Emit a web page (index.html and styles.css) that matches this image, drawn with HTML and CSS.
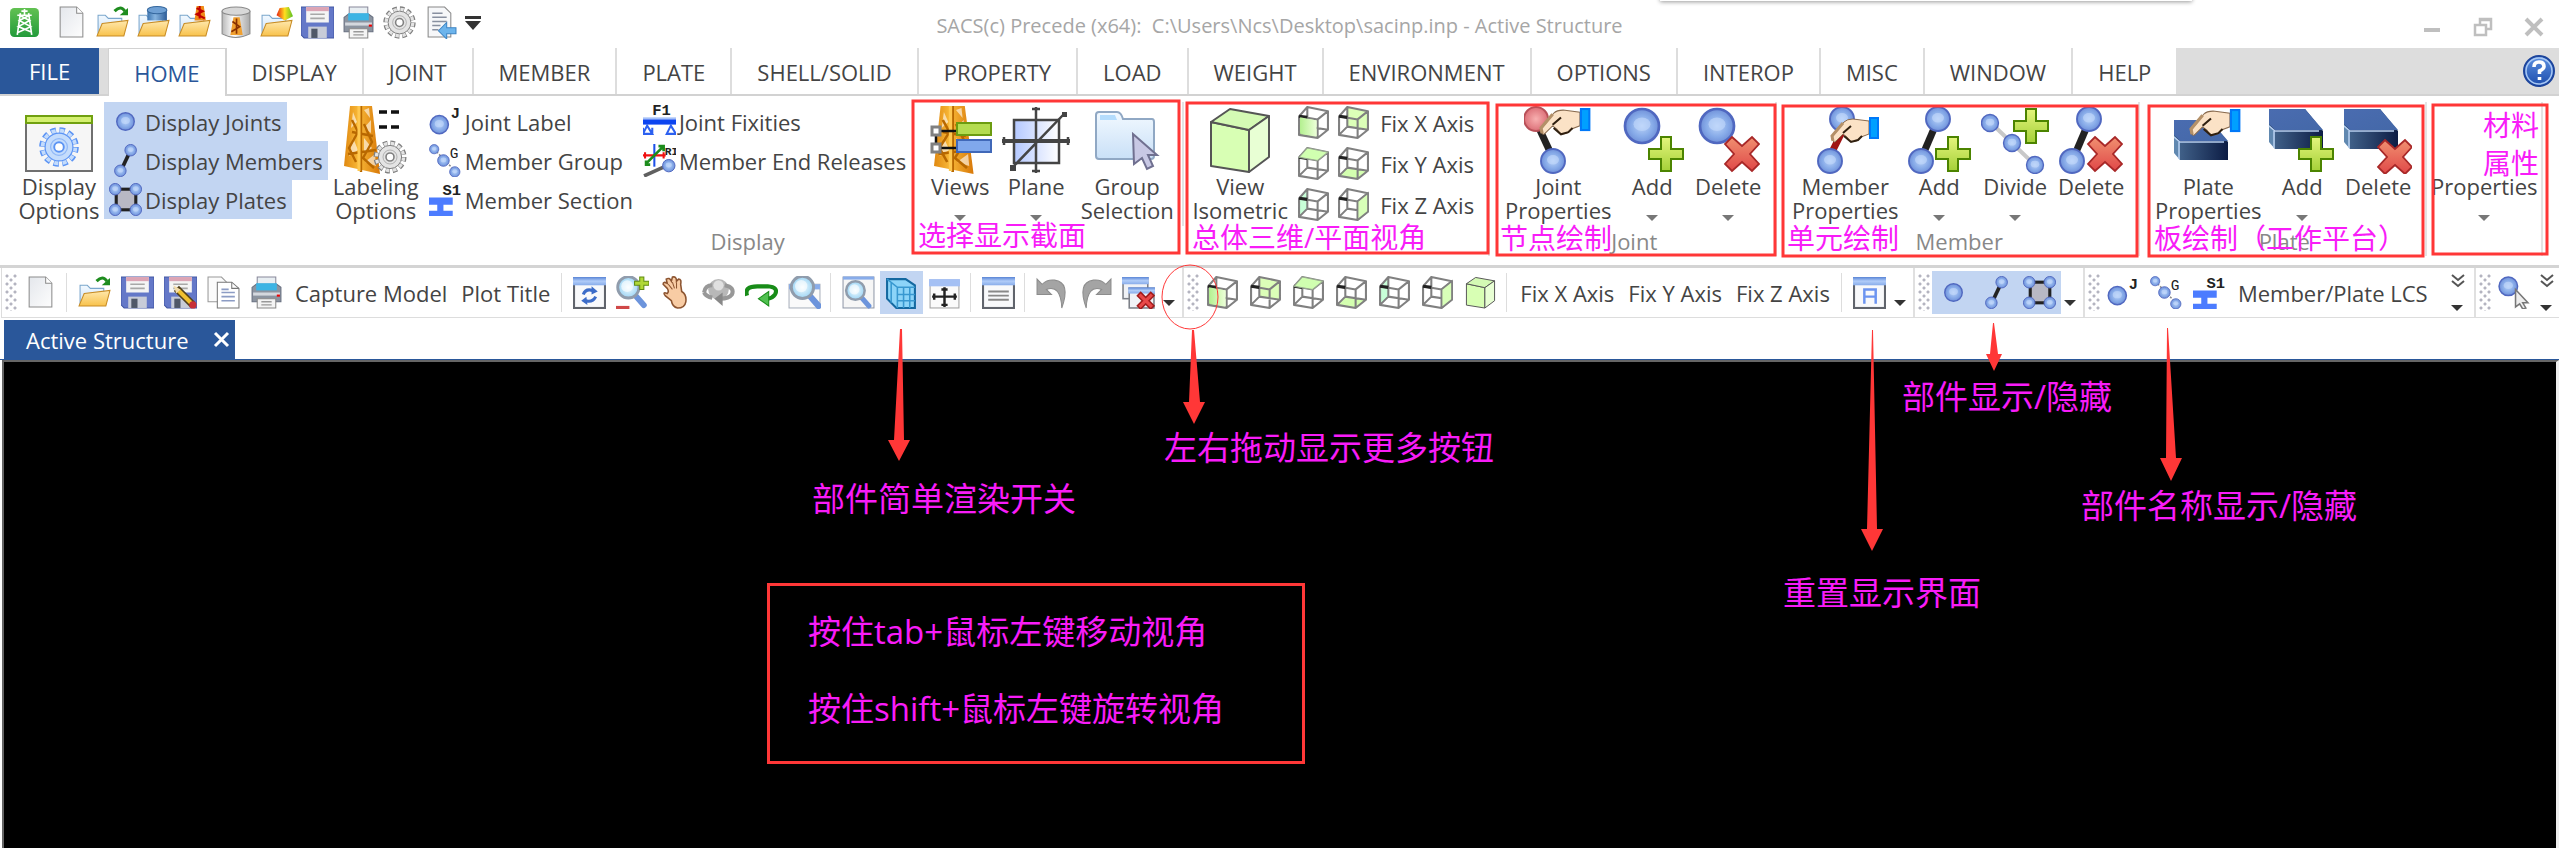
FILE: index.html
```html
<!DOCTYPE html>
<html lang="en">
<head>
<meta charset="utf-8">
<title>SACS(c) Precede (x64)</title>
<link rel="stylesheet" href="styles.css">
</head>
<body>
<svg class="defs" aria-hidden="true">
<defs>
<radialGradient id="gBall"><stop offset="0" stop-color="#b9d2f8"/><stop offset=".65" stop-color="#86aae8"/><stop offset="1" stop-color="#7090d8"/></radialGradient>
<radialGradient id="gRed"><stop offset="0" stop-color="#f8b0b0"/><stop offset="1" stop-color="#dc7078"/></radialGradient>
<linearGradient id="gFold" x2="0" y2="1"><stop offset="0" stop-color="#ffe9ae"/><stop offset="1" stop-color="#f8c24c"/></linearGradient>
<linearGradient id="gBlue" x2="0" y2="1"><stop offset="0" stop-color="#f2f9ff"/><stop offset="1" stop-color="#c9e0f7"/></linearGradient>
<linearGradient id="gDoc" x2="1" y2="1"><stop offset="0" stop-color="#e4e7ec"/><stop offset="1" stop-color="#fdfdfd"/></linearGradient>
<linearGradient id="gApp" x2="0" y2="1"><stop offset="0" stop-color="#62c152"/><stop offset="1" stop-color="#239b3b"/></linearGradient>
<linearGradient id="gPlus" x2="0" y2="1"><stop offset="0" stop-color="#e4f57c"/><stop offset="1" stop-color="#a4d038"/></linearGradient>
<linearGradient id="gX" x2="0" y2="1"><stop offset="0" stop-color="#f09070"/><stop offset="1" stop-color="#e04848"/></linearGradient>
<linearGradient id="gTop" x2="1" y2="1"><stop offset="0" stop-color="#4a6cb0"/><stop offset="1" stop-color="#4468a8"/></linearGradient>
<linearGradient id="gSide"><stop offset="0" stop-color="#406088"/><stop offset="1" stop-color="#0c1c44"/></linearGradient>
<linearGradient id="gJack"><stop offset="0" stop-color="#e08810"/><stop offset=".4" stop-color="#f8b838"/><stop offset="1" stop-color="#d87808"/></linearGradient>
<linearGradient id="gCyl"><stop offset="0" stop-color="#b8b8b8"/><stop offset=".4" stop-color="#ffffff"/><stop offset="1" stop-color="#a8a8a8"/></linearGradient>
<linearGradient id="gDb"><stop offset="0" stop-color="#3c74b0"/><stop offset=".4" stop-color="#86b4e0"/><stop offset="1" stop-color="#2c5c98"/></linearGradient>
<linearGradient id="gHeat"><stop offset="0" stop-color="#e82010"/><stop offset=".5" stop-color="#ffe020"/><stop offset="1" stop-color="#58c020"/></linearGradient>
<linearGradient id="gPlane"><stop offset="0" stop-color="#b4c8ff"/><stop offset="1" stop-color="#ffffff"/></linearGradient>
<linearGradient id="gHelp" x2="0" y2="1"><stop offset="0" stop-color="#5c90e0"/><stop offset="1" stop-color="#1c4cac"/></linearGradient>
<linearGradient id="gBar" x2="0" y2="1"><stop offset="0" stop-color="#5a86d8"/><stop offset=".5" stop-color="#b0ccf8"/><stop offset="1" stop-color="#88acea"/></linearGradient>
<radialGradient id="gLens"><stop offset="0" stop-color="#f4fcff"/><stop offset="1" stop-color="#9cd4f4"/></radialGradient>
<linearGradient id="gFace"><stop offset="0" stop-color="#b4f090"/><stop offset="1" stop-color="#ecffd8"/></linearGradient>

<g id="ball"><circle r="10" fill="url(#gBall)" stroke="#5068c0" stroke-width="1.6"/><ellipse cy="-1" rx="5" ry="4" fill="#c4dafc" opacity=".6"/></g>
<g id="plus"><path d="M-5-17H5V-5H17V5H5V17H-5V5H-17V-5H-5Z" fill="url(#gPlus)" stroke="#4c8400" stroke-width="2"/></g>
<g id="cross"><path d="M-10-17L0-8L10-17L17-10L8 0L17 10L10 17L0 8L-10 17L-17 10L-8 0L-17-10Z" fill="url(#gX)" stroke="#a82828" stroke-width="1.8"/></g>
<g id="hand"><path d="M2 24Q-1 22 2 19L13 5Q16 2 22 2L38 4V17L30 20Q26 26 19 24L16 20L12 17L5 24Q3 26 2 24Z" fill="#fbe2c6" stroke="#8a6c50"/><path d="M12 16L20 9M13 19L20 25L27 23L31 19" fill="none" stroke="#302010" stroke-width="2"/><path d="M2 24L1 19L12 6" fill="none" stroke="#b49068" stroke-width="3"/><rect x="39" y="1" width="8" height="20" fill="#00a0ff" stroke="#0078f8" stroke-width="2"/></g>
<g id="plate"><path d="M0 0H36L54 22L54 40H7L0 30Z" fill="#14264c"/><path d="M0 0H36L54 21H6L0 15Z" fill="url(#gTop)"/><path d="M6 22H54V40H6Z" fill="url(#gSide)"/><path d="M0 15V33L6 40V22Z" fill="#6088b0"/><path d="M0 17L6 22H50M5 22V39" fill="none" stroke="#b8d0f0" stroke-width="1.5"/></g>
<g id="folder"><path d="M2 9H9L12 12H25V28H2Z" fill="url(#gBlue)" stroke="#7aa6cc"/><path d="M6 17L31 14L27 29H1Z" fill="url(#gFold)" stroke="#c88c24"/></g>
<g id="jacket"><path d="M6 0H28L36 68L0 60Z" fill="url(#gJack)"/><path d="M9 6L13 16L7 22ZM9 32L14 44L5 50ZM20 4L25 2L26 12ZM20 22L27 14V27ZM20 32L28 42L20 48ZM21 56L31 48L32 60Z" fill="#fff" opacity=".6"/><path d="M17 0V66M8 26L29 30M4 48L32 44M20 18L28 36L19 52L30 62M8 14L14 26L5 42L12 56" fill="none" stroke="#b86800" stroke-width="2.4"/><path d="M15 0V65" stroke="#ffc850" stroke-width="3"/></g>
<g id="gear"><circle r="14" fill="none" stroke="currentColor" stroke-width="5" stroke-dasharray="4.4 2.93"/><circle r="13" fill="none" stroke="var(--gf)" stroke-width="4.4" stroke-dasharray="3.2 3.607" stroke-dashoffset="-.5"/><circle r="11.6" fill="var(--gf)" stroke="currentColor" stroke-width="1"/><circle r="7" fill="none" stroke="currentColor" opacity=".5"/><circle r="4" fill="#fff" stroke="currentColor" stroke-width="1.6"/></g>
<g id="lens"><path d="M6 7L13 15" stroke="#6c94dc" stroke-width="5" stroke-linecap="round"/><circle r="9" fill="url(#gLens)" stroke="#909cac" stroke-width="2.4"/><circle r="5" cx="-1" cy="-1" fill="#fff" opacity=".6"/></g>
<g id="win"><rect x="1" y="2" width="30" height="29" fill="#f8f9fb" stroke="#60646c" stroke-width="2"/><rect x="0" y="1" width="32" height="8" fill="url(#gBar)"/></g>
<g id="wire" fill="none" stroke="#808080" stroke-width="2" stroke-linejoin="round"><path d="M2 10L20 13V31L2 28ZM2 10L10 1L30 5L20 13M30 5V23L20 31M10 1V20L2 28M10 20L30 23" /><path d="M2 10L10 11" stroke="#222" stroke-width="3"/></g>
</defs>
<symbol id="app" viewBox="0 0 32 32"><rect x="2" y="2" width="28" height="28" rx="4" fill="url(#gApp)"/><path d="M12 7L9 28M20 7L23 28M11 9L21 14L10 20L22 25M21 9L11 14L22 20L9 26M13 5H19M9 9H23M16 3V9" stroke="#fff" stroke-width="1.6" fill="none"/></symbol>
<symbol id="doc" viewBox="0 0 32 32"><path d="M5 1H21L27 7V30H5Z" fill="url(#gDoc)" stroke="#8c8c8c"/><path d="M21 1V7H27" fill="#fff" stroke="#8c8c8c"/></symbol>
<symbol id="open" viewBox="0 0 32 32"><use href="#folder"/><path d="M18 5Q24-1 28 5" fill="none" stroke="#1e8c1e" stroke-width="3"/><path d="M31 2V9H23Z" fill="#1e8c1e"/></symbol>
<symbol id="opendb" viewBox="0 0 32 32"><use href="#folder"/><path d="M10 4V14H29V4Z" fill="url(#gDb)"/><ellipse cx="19.500" cy="4" rx="9.500" ry="3.500" fill="#6fa0d4" stroke="#34669c"/></symbol>
<symbol id="openjk" viewBox="0 0 32 32"><use href="#folder"/><path d="M18 0H25L27 14H16Z" fill="#f08c18"/><path d="M18 2L24 5L18 8L26 12M21 0V12" stroke="#c00000" stroke-width="2" fill="none"/></symbol>
<symbol id="cyl" viewBox="0 0 32 32"><path d="M3 5V27Q16 34 30 27V5Z" fill="url(#gCyl)" stroke="#888"/><ellipse cx="16.500" cy="5" rx="13.500" ry="4" fill="#d8d8d8" stroke="#888"/><path d="M14 11H20L23 28H11Z" fill="#f0a030"/><path d="M13 15L20 20L12 25M17 12V27" stroke="#883000" stroke-width="1.6" fill="none"/></symbol>
<symbol id="opencol" viewBox="0 0 32 32"><use href="#folder"/><path d="M19 2L28 1L32 10L24 14L16 9Z" fill="url(#gHeat)"/></symbol>
<symbol id="save" viewBox="0 0 32 32"><path d="M0 1H32V31H3L0 28Z" fill="#6478c8" stroke="#4458a4"/><path d="M5 1H27V16H5Z" fill="#f4f4f4"/><path d="M5 1H27V5H5Z" fill="#dca4b4"/><path d="M9 8H23M9 12H23" stroke="#a8a8a8" stroke-width="1.6"/><path d="M7 20H25V31H7Z" fill="#c8ccd8"/><path d="M10 22H16V31H10Z" fill="#505868"/></symbol>
<symbol id="saveas" viewBox="0 0 32 32"><use href="#save" width="32" height="32"/><path d="M12 12L28 28" stroke="#50401c" stroke-width="7"/><path d="M14 14L26 26" stroke="#f0c030" stroke-width="4"/><path d="M9 9L16 13L12 17Z" fill="#f4dca8"/><circle cx="28" cy="28" r="3.500" fill="#c83038"/></symbol>
<symbol id="copy" viewBox="0 0 32 32"><path d="M1 1H14L19 6V25H1Z" fill="#fbfbfb" stroke="#999"/><path d="M10 6H24L31 12V31H10Z" fill="#fff" stroke="#777"/><path d="M24 6V12H31" fill="none" stroke="#777"/><path d="M14 16H27M14 20H27M14 24H27M14 13H21" stroke="#8c9cc4" stroke-width="1.6"/></symbol>
<symbol id="print" viewBox="0 0 32 32"><path d="M7 1H25V12H7Z" fill="#e8eef2" stroke="#889"/><path d="M2 11L6 8H26L30 11V25H2Z" fill="#8c94a0" stroke="#687080"/><path d="M6 7H26V14H6Z" fill="#3cb4e4"/><path d="M3 16H29V19H3Z" fill="#d4d8de"/><rect x="26" y="18" width="3" height="2" fill="#e00"/><path d="M7 22H25V31H7Z" fill="#f4f4f4" stroke="#888"/><path d="M11 25H21M11 28H21" stroke="#999" stroke-width="1.400"/></symbol>
<symbol id="cog" viewBox="-16 -16 32 32"><use href="#gear" transform="scale(.95)"/></symbol>
<symbol id="docarrow" viewBox="0 0 32 32"><path d="M4 1H20L26 7V30H4Z" fill="#f6f7f9" stroke="#888"/><path d="M8 7H18M8 11H22M8 15H22M8 19H16M8 23H14" stroke="#8890a0" stroke-width="1.500"/><path d="M14 24L22 16V21H31V27H22V32Z" fill="#6cb4ec" stroke="#3c84c4"/></symbol>

<symbol id="joint" viewBox="0 0 32 32"><use href="#ball" transform="translate(16 16) scale(.85)"/></symbol>
<symbol id="member" viewBox="0 0 32 32"><path d="M20 8L12 25" stroke="#222" stroke-width="3.600"/><use href="#ball" transform="translate(21 6) scale(.56)"/><use href="#ball" transform="translate(11 26) scale(.56)"/></symbol>
<symbol id="plates" viewBox="0 0 32 32"><rect x="7" y="6" width="19" height="20" fill="#b8b8c4" stroke="#222" stroke-width="3"/><use href="#ball" transform="translate(6 6) scale(.56)"/><use href="#ball" transform="translate(26 6) scale(.56)"/><use href="#ball" transform="translate(6 26) scale(.56)"/><use href="#ball" transform="translate(26 26) scale(.56)"/></symbol>
<symbol id="jlabel" viewBox="0 0 32 32"><use href="#ball" transform="translate(10 19) scale(.88)"/><text x="21" y="13" class="glyph">J</text></symbol>
<symbol id="mgroup" viewBox="0 0 32 32"><path d="M5 5L26 27" stroke="#888" stroke-dasharray="2 1.500" stroke-width="1.500"/><use href="#ball" transform="translate(5 5) scale(.45)"/><use href="#ball" transform="translate(14 16) scale(.56)"/><use href="#ball" transform="translate(25 27) scale(.5)"/><text x="20" y="14" class="glyph thin">G</text></symbol>
<symbol id="msection" viewBox="0 0 32 32"><path d="M0 14H23V21H14V27H23V33H0V27H8V21H0Z" fill="#4c7cff"/><text x="13" y="12" class="glyph">S1</text></symbol>
<symbol id="fixity" viewBox="0 0 32 32"><text x="9" y="10" class="glyph">F1</text><rect y="12" width="32" height="2" fill="#a4c0f8"/><rect y="14" width="32" height="5" fill="#0c44f0"/><path d="M4 20L0 28H9ZM27 20L23 28H32ZM0 28V22M9 28V22" fill="#fff" stroke="#2c60f0" stroke-width="2"/></symbol>
<symbol id="release" viewBox="0 0 32 32"><path d="M11 0V22" stroke="#1c50e8" stroke-width="2"/><path d="M0 11H22M2 8V14M20 8V14" stroke="#f01010" stroke-width="2"/><path d="M3 19L19 3M3 16V20H7M15 2H20V7" stroke="#1c8c1c" stroke-width="2.600" fill="none"/><path d="M1 31L21 22" stroke="#606060" stroke-width="3.500"/><use href="#ball" transform="translate(25 21) scale(.6)"/><text x="21" y="11" class="glyph tiny">RI</text></symbol>
<symbol id="c1" viewBox="0 0 32 32"><path d="M2 10L20 13V31L2 28Z" fill="url(#gFace)"/><use href="#wire"/><path d="M3 11L19 14V29L3 27Z" fill="url(#gFace)"/></symbol>
<symbol id="c2" viewBox="0 0 32 32"><path d="M10 1L30 5V23L10 20Z" fill="#dcffb8"/><use href="#wire"/></symbol>
<symbol id="c3" viewBox="0 0 32 32"><use href="#wire"/><path d="M2 10L10 1L30 5L20 13Z" fill="#d0ffb0" stroke="#98a890"/></symbol>
<symbol id="c4" viewBox="0 0 32 32"><path d="M2 28L10 20L30 23L20 31Z" fill="#d4ffb0"/><use href="#wire"/></symbol>
<symbol id="c5" viewBox="0 0 32 32"><path d="M2 10L10 1V20L2 28Z" fill="#c8ffd8"/><use href="#wire"/></symbol>
<symbol id="c6" viewBox="0 0 32 32"><use href="#wire"/><path d="M20 13L30 5V23L20 31Z" fill="#d8ffb8" stroke="#808080" stroke-width="1.500"/></symbol>
<symbol id="iso" viewBox="0 0 68 68"><g stroke="#555" stroke-width="2" stroke-linejoin="round"><path d="M5 16L43 24V66L5 60Z" fill="#d8ffb4"/><path d="M5 16L24 3L63 10L43 24Z" fill="#d4fab4"/><path d="M43 24L63 10V51L43 66Z" fill="#e8ffd4"/></g></symbol>

<symbol id="dispopt" viewBox="0 0 68 68"><rect x="1" y="10" width="66" height="55" fill="#f6f6f6" stroke="#707070" stroke-width="2"/><rect x="1" y="10" width="66" height="7" fill="#d4f070" stroke="#70a010" stroke-width="2"/><use href="#gear" class="bluegear" transform="translate(34 41) scale(1.2)"/></symbol>
<symbol id="labelopt" viewBox="0 0 68 68"><use href="#jacket" transform="translate(2 0)"/><path d="M37 6H45M49 6H57M37 21H45M49 21H57" stroke="#111" stroke-width="3.500"/><use href="#gear" class="greygear" transform="translate(48 51)"/></symbol>
<symbol id="views" viewBox="0 0 68 68"><use href="#jacket" transform="translate(8 0) scale(1.100 1)"/><path d="M10 25H30M10 42H30M10 25V42" stroke="#111" stroke-width="2.500"/><rect x="6" y="21" width="8" height="8" fill="#fff" stroke="#808080" stroke-width="3"/><rect x="6" y="38" width="8" height="8" fill="#fff" stroke="#808080" stroke-width="3"/><rect x="31" y="17" width="34" height="12" fill="#b4dc50" stroke="#6c9c10" stroke-width="2"/><rect x="31" y="34" width="34" height="12" fill="#80a8ec" stroke="#4068b8" stroke-width="2"/></symbol>
<symbol id="plane" viewBox="0 0 68 68"><rect x="12" y="14" width="45" height="43" fill="url(#gPlane)" stroke="#444" stroke-width="2.500"/><path d="M0 35H68M34 1V67M10 62L62 8M2 31V39M66 31V39M30 3H38M30 65H38" stroke="#444" stroke-width="2.500"/><path d="M0 35H68" stroke="#444" stroke-width="4"/><rect x="8" y="59" width="6" height="6" fill="#444"/><rect x="60" y="6" width="5" height="5" fill="#444"/></symbol>
<symbol id="groupsel" viewBox="0 0 68 68"><path d="M3 9Q3 6 6 6H24Q28 6 30 13H59Q61 13 61 16V50Q61 53 58 53H6Q3 53 3 50Z" fill="url(#gBlue)" stroke="#90a8c4" stroke-width="2"/><path d="M7 9H22L24 14H7Z" fill="#b4dcfc"/><path d="M40 28L64 49H55L60 60L54 63L49 52L41 58Z" fill="#c8c8e4" stroke="#707090" stroke-width="2"/></symbol>
<symbol id="jprop" viewBox="0 0 68 68"><path d="M15 22L28 50" stroke="#222" stroke-width="7"/><circle cx="12" cy="13" r="12" fill="url(#gRed)" stroke="#b85058" stroke-width="2"/><use href="#ball" transform="translate(29 55) scale(1.200)"/><use href="#hand" transform="translate(16 2) scale(1.050)"/></symbol>
<symbol id="jadd" viewBox="0 0 68 68"><use href="#ball" transform="translate(24 20) scale(1.700)"/><use href="#plus" transform="translate(48 48)"/></symbol>
<symbol id="jdel" viewBox="0 0 68 68"><use href="#ball" transform="translate(23 20) scale(1.700)"/><use href="#cross" transform="translate(48 48)"/></symbol>
<symbol id="mprop" viewBox="0 0 68 68"><use href="#ball" transform="translate(31 13) scale(1.200)"/><path d="M31 26L20 48" stroke="#a01414" stroke-width="7"/><use href="#ball" transform="translate(19 55) scale(1.200)"/><use href="#hand" transform="translate(20 11) scale(1)"/></symbol>
<symbol id="madd" viewBox="0 0 68 68"><path d="M31 18L19 46" stroke="#222" stroke-width="7"/><use href="#ball" transform="translate(33 13) scale(1.200)"/><use href="#ball" transform="translate(16 55) scale(1.200)"/><use href="#plus" transform="translate(48 48)"/></symbol>
<symbol id="mdiv" viewBox="0 0 68 68"><path d="M10 17L54 59" stroke="#c8c8c8" stroke-width="4"/><use href="#ball" transform="translate(9 17) scale(.85)"/><use href="#ball" transform="translate(31 37) scale(.85)"/><use href="#ball" transform="translate(54 59) scale(.85)"/><use href="#plus" transform="translate(50 20)"/></symbol>
<symbol id="mdel" viewBox="0 0 68 68"><path d="M31 18L19 46" stroke="#222" stroke-width="7"/><use href="#ball" transform="translate(32 13) scale(1.200)"/><use href="#ball" transform="translate(15 55) scale(1.200)"/><use href="#cross" transform="translate(48 48)"/></symbol>
<symbol id="pprop" viewBox="0 0 68 68"><use href="#plate" y="14"/><use href="#hand" transform="translate(16 3) scale(1.050)"/></symbol>
<symbol id="padd" viewBox="0 0 68 68"><use href="#plate" x="1" y="3"/><use href="#plus" transform="translate(48 48)"/></symbol>
<symbol id="pdel" viewBox="0 0 68 68"><use href="#plate" x="0" y="3"/><use href="#cross" transform="translate(51 51)"/></symbol>

<symbol id="refresh" viewBox="0 0 32 32"><use href="#win"/><path d="M10 18Q12 12 19 14M22 20Q19 26 12 24" fill="none" stroke="#3c6cc8" stroke-width="3"/><path d="M18 10L24 15L18 18ZM13 20L8 24L14 28Z" fill="#3c6cc8"/></symbol>
<symbol id="zoompm" viewBox="0 0 32 32"><use href="#lens" transform="translate(12 11)  scale(1.150)"/><path d="M23 1H27V5H32V9H27V13H23V9H18V5H23Z" fill="#b0d838" stroke="#608c10"/><rect x="0" y="29" width="13" height="3" fill="#d04848"/></symbol>
<symbol id="pan" viewBox="0 0 32 32"><path d="M8 12L4 8Q4 5 8 7L7 3Q10 1 12 5L13 1Q17 0 17 5L19 3Q22 3 21 8L22 15Q27 18 26 25Q25 31 18 31Q13 30 12 24L6 19Q3 15 8 17Q10 15 8 12Z" fill="#f8cca4" stroke="#8c5430" stroke-width="1.500"/><path d="M9 8L13 13M13 6L15 12M17 6V12" stroke="#8c5430"/></symbol>
<symbol id="orbit" viewBox="0 0 32 32"><circle cx="16" cy="13" r="10" fill="#b8b8b8"/><circle cx="16" cy="9" r="5" fill="#e0e0e0"/><path d="M2 16Q3 9 10 9M22 9Q32 11 29 18Q26 22 18 22M2 16Q4 20 10 21" fill="none" stroke="#989898" stroke-width="4"/><path d="M20 16V29L12 22Z" fill="#888"/></symbol>
<symbol id="spin" viewBox="0 0 32 32"><path d="M2 19Q-1 10 12 10H22Q33 11 29 18Q27 21 22 22" fill="none" stroke="#188c18" stroke-width="4"/><path d="M23 15V29L13 22Z" fill="#50c050" stroke="#188c18"/></symbol>
<symbol id="zoomwin" viewBox="0 0 32 32"><rect x="1" y="8" width="30" height="23" fill="#fafafa" stroke="#a8b0bc"/><rect x="1" y="8" width="30" height="5" fill="#88acea"/><use href="#lens" transform="translate(14 11) scale(1.200)"/></symbol>
<symbol id="zoomfit" viewBox="0 0 32 32"><rect x="1" y="1" width="30" height="30" fill="#f6f6f6" stroke="#9098a8"/><path d="M1 2H31" stroke="#88acea" stroke-width="3"/><use href="#lens" transform="translate(13 14)"/></symbol>
<symbol id="solid" viewBox="0 0 32 32"><path d="M2 3H20L29 9V31H11L2 22Z" fill="#8cd4f8" stroke="#1468a0" stroke-width="2"/><path d="M2 3L12 11H29M12 11V31M18 11V31M24 11V31M12 18H29M12 24H29M6 6V26" fill="none" stroke="#3898d0" stroke-width="1.500"/></symbol>
<symbol id="center" viewBox="0 0 32 32"><rect x="2" y="4" width="28" height="27" fill="#fafafa" stroke="#a0a0a0"/><rect x="1" y="3" width="30" height="7" fill="#a4c0f4"/><path d="M16 11V30M4 20H28M13 13H19M13 28H19M6 17V23M26 17V23" stroke="#222" stroke-width="2.400"/></symbol>
<symbol id="listwin" viewBox="0 0 32 32"><use href="#win"/><path d="M6 15H26M6 19H26M6 23H26" stroke="#888" stroke-width="1.800"/></symbol>
<symbol id="undo" viewBox="0 0 32 32"><path d="M1 3V18H15L10 13Q24 8 25 31Q34 6 18 4Q11 3 6 8Z" fill="#a4a4a4" stroke="#8c8c8c"/></symbol>
<symbol id="redo" viewBox="0 0 32 32"><path d="M31 3V18H17L22 13Q8 8 7 31Q-2 6 14 4Q21 3 26 8Z" fill="#a4a4a4" stroke="#8c8c8c"/></symbol>
<symbol id="closewins" viewBox="0 0 32 32"><rect x="1" y="2" width="24" height="20" fill="#f0f2f6" stroke="#7c8088" stroke-width="1.500"/><rect x="0" y="1" width="26" height="7" fill="url(#gBar)"/><rect x="7" y="12" width="24" height="19" fill="#f0f2f6" stroke="#7c8088" stroke-width="1.500"/><rect x="6" y="11" width="26" height="6" fill="url(#gBar)"/><path d="M16 17L30 31M30 17L16 31" stroke="#a01c1c" stroke-width="6"/><path d="M17 18L29 30M29 18L17 30" stroke="#e84848" stroke-width="3"/></symbol>
<symbol id="awin" viewBox="0 0 32 32"><use href="#win"/><path d="M11 27V13H22V27M11 20H22" fill="none" stroke="#6c94f0" stroke-width="2.400"/></symbol>
<symbol id="pick" viewBox="0 0 32 32"><use href="#ball" transform="translate(10 10) scale(.9)"/><path d="M17 13L29 26L24 26L27 31L24 32L21 27L17 30Z" fill="#eee" stroke="#777" stroke-width="1.500"/></symbol>
</svg>

<div class="app">
<header class="titlebar">
  <div class="quick">
    <svg class="ic"><use href="#app"/></svg>
    <button aria-label="New"><svg class="ic"><use href="#doc"/></svg></button>
    <button aria-label="Open"><svg class="ic"><use href="#open"/></svg></button>
    <button aria-label="Open database"><svg class="ic"><use href="#opendb"/></svg></button>
    <button aria-label="Open model"><svg class="ic"><use href="#openjk"/></svg></button>
    <button aria-label="Model data"><svg class="ic"><use href="#cyl"/></svg></button>
    <button aria-label="Open results"><svg class="ic"><use href="#opencol"/></svg></button>
    <button aria-label="Save"><svg class="ic"><use href="#save"/></svg></button>
    <button aria-label="Print"><svg class="ic"><use href="#print"/></svg></button>
    <button aria-label="Settings"><svg class="ic greygear"><use href="#cog"/></svg></button>
    <button aria-label="Import"><svg class="ic"><use href="#docarrow"/></svg></button>
    <button class="more" aria-label="Customize"><svg width="16" height="14" viewBox="0 0 16 14"><path d="M0 0H16V3H0ZM0 5H16L8 14Z" fill="#333"/></svg></button>
  </div>
  <h1 class="title">SACS(c) Precede (x64):  C:\Users\Ncs\Desktop\sacinp.inp - Active Structure</h1>
  <div class="winctl">
    <button aria-label="Minimize"><svg width="20" height="20"><path d="M2 11H18V15H2Z" fill="#bfbfbf"/></svg></button>
    <button aria-label="Restore"><svg width="20" height="20" fill="none" stroke="#bfbfbf" stroke-width="2.500"><path d="M7 7V2H18V12H13M7 3H18"/><rect x="2" y="8" width="11" height="10"/></svg></button>
    <button aria-label="Close"><svg width="20" height="20"><path d="M2 2L18 18M18 2L2 18" stroke="#bfbfbf" stroke-width="4"/></svg></button>
  </div>
</header>
<div class="dock" aria-hidden="true"></div>

<nav class="tabs">
  <button class="tab file">FILE</button>
  <button class="tab home">HOME</button><button class="tab">DISPLAY</button><button class="tab">JOINT</button><button class="tab">MEMBER</button><button class="tab">PLATE</button><button class="tab">SHELL/SOLID</button><button class="tab">PROPERTY</button><button class="tab">LOAD</button><button class="tab">WEIGHT</button><button class="tab">ENVIRONMENT</button><button class="tab">OPTIONS</button><button class="tab">INTEROP</button><button class="tab">MISC</button><button class="tab">WINDOW</button><button class="tab">HELP</button>
  <button class="help" aria-label="Help"><svg width="34" height="34" viewBox="0 0 34 34"><circle cx="17" cy="17" r="15" fill="url(#gHelp)" stroke="#1c449c" stroke-width="2"/><circle cx="17" cy="17" r="13" fill="none" stroke="#a8c8f4" stroke-width="1.500"/><path d="M12 13Q12 8 17 8Q22 8 22 12.500Q22 15 17.500 17V20M17.500 23V26" fill="none" stroke="#fff" stroke-width="3.600"/></svg></button>
</nav>

<section class="ribbon">
  <div class="group g-display">
    <div class="tools">
      <button class="big w90"><svg class="bic"><use href="#dispopt"/></svg><span>Display<br>Options</span></button>
      <div class="list">
        <button class="row on" aria-pressed="true"><svg class="ic"><use href="#joint"/></svg>Display Joints</button>
        <button class="row on" aria-pressed="true"><svg class="ic"><use href="#member"/></svg>Display Members</button>
        <button class="row on" aria-pressed="true"><svg class="ic"><use href="#plates"/></svg>Display Plates</button>
      </div>
      <button class="big w96"><svg class="bic"><use href="#labelopt"/></svg><span>Labeling<br>Options</span></button>
      <div class="list">
        <button class="row"><svg class="ic"><use href="#jlabel"/></svg>Joint Label</button>
        <button class="row"><svg class="ic"><use href="#mgroup"/></svg>Member Group</button>
        <button class="row"><svg class="ic"><use href="#msection"/></svg>Member Section</button>
      </div>
      <div class="list">
        <button class="row"><svg class="ic"><use href="#fixity"/></svg>Joint Fixities</button>
        <button class="row"><svg class="ic"><use href="#release"/></svg>Member End Releases</button>
      </div>
      <div class="cluster">
        <button class="big"><svg class="bic"><use href="#views"/></svg><span>Views</span><i class="caret"></i></button>
        <button class="big"><svg class="bic"><use href="#plane"/></svg><span>Plane</span><i class="caret"></i></button>
        <button class="big w104"><svg class="bic"><use href="#groupsel"/></svg><span>Group<br>Selection</span></button>
      </div>
      <div class="cluster ruled">
        <button class="big w104"><svg class="bic"><use href="#iso"/></svg><span>View<br>Isometric</span></button>
        <div class="cubes">
          <button aria-label="Front"><svg class="ic"><use href="#c1"/></svg></button><button aria-label="Back"><svg class="ic"><use href="#c2"/></svg></button><button class="txt">Fix X Axis</button>
          <button aria-label="Top"><svg class="ic"><use href="#c3"/></svg></button><button aria-label="Bottom"><svg class="ic"><use href="#c4"/></svg></button><button class="txt">Fix Y Axis</button>
          <button aria-label="Left"><svg class="ic"><use href="#c5"/></svg></button><button aria-label="Right"><svg class="ic"><use href="#c6"/></svg></button><button class="txt">Fix Z Axis</button>
        </div>
      </div>
    </div>
    <div class="caption">Display</div>
  </div>
  <div class="group">
    <div class="tools">
      <button class="big w112"><svg class="bic"><use href="#jprop"/></svg><span>Joint<br>Properties</span></button>
      <button class="big"><svg class="bic"><use href="#jadd"/></svg><span>Add</span><i class="caret"></i></button>
      <button class="big"><svg class="bic"><use href="#jdel"/></svg><span>Delete</span><i class="caret"></i></button>
    </div>
    <div class="caption">Joint</div>
  </div>
  <div class="group">
    <div class="tools">
      <button class="big w112"><svg class="bic"><use href="#mprop"/></svg><span>Member<br>Properties</span></button>
      <button class="big"><svg class="bic"><use href="#madd"/></svg><span>Add</span><i class="caret"></i></button>
      <button class="big"><svg class="bic"><use href="#mdiv"/></svg><span>Divide</span><i class="caret"></i></button>
      <button class="big"><svg class="bic"><use href="#mdel"/></svg><span>Delete</span></button>
    </div>
    <div class="caption">Member</div>
  </div>
  <div class="group">
    <div class="tools">
      <button class="big w112"><svg class="bic"><use href="#pprop"/></svg><span>Plate<br>Properties</span></button>
      <button class="big"><svg class="bic"><use href="#padd"/></svg><span>Add</span><i class="caret"></i></button>
      <button class="big"><svg class="bic"><use href="#pdel"/></svg><span>Delete</span></button>
    </div>
    <div class="caption">Plate</div>
  </div>
  <div class="group g-props">
    <div class="tools">
      <button class="big w112"><svg class="bic"></svg><span>Properties</span><i class="caret"></i></button>
    </div>
  </div>
</section>

<div class="toolbar">
  <div class="band">
    <i class="grip"></i>
    <button class="tb" aria-label="New"><svg class="ic"><use href="#doc"/></svg></button><i class="sep"></i>
    <button class="tb" aria-label="Open"><svg class="ic"><use href="#open"/></svg></button>
    <button class="tb" aria-label="Save"><svg class="ic"><use href="#save"/></svg></button>
    <button class="tb" aria-label="Save as"><svg class="ic"><use href="#saveas"/></svg></button>
    <button class="tb" aria-label="Copy"><svg class="ic"><use href="#copy"/></svg></button>
    <button class="tb" aria-label="Print"><svg class="ic"><use href="#print"/></svg></button>
    <button class="txt">Capture Model</button><button class="txt">Plot Title</button><i class="sep"></i>
    <button class="tb" aria-label="Refresh"><svg class="ic"><use href="#refresh"/></svg></button>
    <button class="tb" aria-label="Zoom"><svg class="ic"><use href="#zoompm"/></svg></button>
    <button class="tb" aria-label="Pan"><svg class="ic"><use href="#pan"/></svg></button>
    <button class="tb" aria-label="Orbit"><svg class="ic"><use href="#orbit"/></svg></button>
    <button class="tb" aria-label="Rotate"><svg class="ic"><use href="#spin"/></svg></button>
    <button class="tb" aria-label="Zoom window"><svg class="ic"><use href="#zoomwin"/></svg></button><i class="sep"></i>
    <button class="tb" aria-label="Zoom fit"><svg class="ic"><use href="#zoomfit"/></svg></button>
    <button class="tb on" aria-label="Solid rendering"><svg class="ic"><use href="#solid"/></svg></button>
    <button class="tb" aria-label="Center"><svg class="ic"><use href="#center"/></svg></button><i class="sep"></i>
    <button class="tb" aria-label="List"><svg class="ic"><use href="#listwin"/></svg></button><i class="sep"></i>
    <button class="tb" aria-label="Undo"><svg class="ic"><use href="#undo"/></svg></button>
    <button class="tb" aria-label="Redo"><svg class="ic"><use href="#redo"/></svg></button>
    <button class="tb" aria-label="Close windows"><svg class="ic"><use href="#closewins"/></svg></button>
    <button class="drop" aria-label="More"><i class="caret"></i></button>
  </div>
  <div class="band">
    <i class="grip"></i>
    <button class="tb" aria-label="Front"><svg class="ic"><use href="#c1"/></svg></button>
    <button class="tb" aria-label="Back"><svg class="ic"><use href="#c2"/></svg></button>
    <button class="tb" aria-label="Top"><svg class="ic"><use href="#c3"/></svg></button>
    <button class="tb" aria-label="Bottom"><svg class="ic"><use href="#c4"/></svg></button>
    <button class="tb" aria-label="Left"><svg class="ic"><use href="#c5"/></svg></button>
    <button class="tb" aria-label="Right"><svg class="ic"><use href="#c6"/></svg></button>
    <button class="tb" aria-label="Isometric"><svg class="ic"><use href="#iso"/></svg></button><i class="sep"></i>
    <button class="txt">Fix X Axis</button><button class="txt">Fix Y Axis</button><button class="txt">Fix Z Axis</button><i class="sep"></i>
    <button class="tb" aria-label="Reset view"><svg class="ic"><use href="#awin"/></svg></button>
    <button class="drop" aria-label="More"><i class="caret"></i></button>
  </div>
  <div class="band">
    <i class="grip"></i>
    <button class="tb on" aria-label="Joints"><svg class="ic"><use href="#joint"/></svg></button>
    <button class="tb on" aria-label="Members"><svg class="ic"><use href="#member"/></svg></button>
    <button class="tb on" aria-label="Plates"><svg class="ic"><use href="#plates"/></svg></button>
    <button class="drop" aria-label="More"><i class="caret"></i></button>
  </div>
  <div class="band">
    <i class="grip"></i>
    <button class="tb" aria-label="Joint label"><svg class="ic"><use href="#jlabel"/></svg></button>
    <button class="tb" aria-label="Member group"><svg class="ic"><use href="#mgroup"/></svg></button>
    <button class="tb" aria-label="Member section"><svg class="ic"><use href="#msection"/></svg></button>
    <button class="txt">Member/Plate LCS</button>
    <button class="drop over wide" aria-label="More"><svg width="14" height="14" viewBox="0 0 14 14" fill="none" stroke="#555" stroke-width="2"><path d="M1 1L7 6L13 1M1 7L7 12L13 7"/></svg><i class="caret"></i></button>
  </div>
  <div class="band last">
    <i class="grip"></i>
    <button class="tb" aria-label="Pick joint"><svg class="ic"><use href="#pick"/></svg></button>
    <button class="drop over" aria-label="More"><svg width="14" height="14" viewBox="0 0 14 14" fill="none" stroke="#555" stroke-width="2"><path d="M1 1L7 6L13 1M1 7L7 12L13 7"/></svg><i class="caret"></i></button>
  </div>
</div>

<div class="docs">
  <div class="doctab"><span>Active Structure</span><button aria-label="Close tab"><svg width="15" height="15"><path d="M1 1L14 14M14 1L1 14" stroke="#fff" stroke-width="3"/></svg></button></div>
</div>
<main class="canvas"></main>

<div class="notes">
  <svg class="marks" aria-hidden="true">
    <g fill="none" stroke="#ff3737" stroke-width="3">
      <rect x="913" y="101" width="266" height="152"/><rect x="1187" y="103" width="301" height="150"/><rect x="1497" y="105" width="278" height="150"/><rect x="1783" y="106" width="354" height="150"/><rect x="2149" y="106" width="274" height="150"/><rect x="2433" y="105" width="114" height="149"/>
    </g>
    <ellipse cx="1190" cy="297" rx="28" ry="32" fill="none" stroke="#ff3737"/>
    <g fill="#ff3737">
      <path d="M900 329H902L904 440H910L899 461L888 440H894Z"/>
      <path d="M1192 330H1194L1200 402H1205L1194 424L1183 402H1189Z"/>
      <path d="M1872 330H1873L1877 529H1883L1872 551L1861 529H1867Z"/>
      <path d="M1993 323H1994L1998 354H2002L1994 371L1986 354H1990Z"/>
      <path d="M2167 328H2168L2176 458H2182L2171 481L2160 458H2166Z"/>
    </g>
  </svg>
  <p class="note n-section">选择显示截面</p>
  <p class="note n-view">总体三维/平面视角</p>
  <p class="note n-joint">节点绘制</p>
  <p class="note n-member">单元绘制</p>
  <p class="note n-plate">板绘制（工作平台）</p>
  <p class="note n-material">材料<br>属性</p>
  <p class="note large n-render">部件简单渲染开关</p>
  <p class="note large n-drag">左右拖动显示更多按钮</p>
  <p class="note large n-parts">部件显示/隐藏</p>
  <p class="note large n-names">部件名称显示/隐藏</p>
  <p class="note large n-reset">重置显示界面</p>
  <div class="tips"><p>按住tab+鼠标左键移动视角</p><p>按住shift+鼠标左键旋转视角</p></div>
</div>
</div>
</body>
</html>
```
FILE: styles.css
```css
* { box-sizing: border-box; }
body {
  margin: 0;
  font: 22px/24px "Open Sans", "Noto Sans CJK SC", sans-serif;
  color: #444;
  background: #fff;
}
button {
  font: inherit;
  color: inherit;
  background: none;
  border: 0;
  padding: 0;
  margin: 0;
  white-space: nowrap;
}
svg { display: block; flex: none; overflow: visible; }
.defs { position: absolute; width: 0; height: 0; }
.app { position: relative; display: flex; flex-direction: column; min-height: 100vh; }
.ic { width: 33px; height: 33px; }
.bic { width: 68px; height: 68px; }
.glyph { font: bold 15px "Liberation Mono", monospace; fill: #222; }
.thin { font-weight: normal; font-size: 14px; }
.tiny { font-size: 11px; }
.greygear { color: #808080; --gf: #e4e4e4; }
.bluegear { color: #5c94f4; --gf: #c4dcfc; }

.titlebar {
  display: grid;
  grid-template-columns: 1fr auto 1fr;
  align-items: center;
  height: 48px;
}
.dock {
  position: absolute;
  top: -8px;
  left: 1660px;
  width: 532px;
  height: 9px;
  box-shadow: 0 1px 4px #999;
}
.quick { display: flex; align-items: center; gap: 8px; padding: 0 0 3px 8px; }
.quick > :nth-child(2) { margin-left: 6px; }
.title { margin: 0; font-size: 20px; font-weight: normal; color: #a6a6a6; white-space: pre; padding-top: 4px; }
.winctl { display: flex; justify-content: flex-end; gap: 31px; padding: 6px 15px 0 0; }

.tabs { display: flex; height: 48px; background: #ddd; border-bottom: 2px solid #d2d2d2; }
.tab { padding: 2px 25px 0; background: #fff; border-right: 2px solid #ddd; }
.tab:nth-last-child(2) { border-right: 0; }
.file { background: #2a579a; color: #fff; border: 0; padding: 0 29px; margin-right: 9px; }
.home { color: #2a579a; border: 2px solid #d2d2d2; border-width: 1px 2px 0 1px; margin-bottom: -2px; padding-bottom: 2px; }
.help { margin-left: auto; padding-right: 3px; }

.ribbon { display: flex; height: 172px; border-bottom: 3px solid #d4d4d4; padding-top: 6px; }
.group { display: flex; flex-direction: column; padding: 0 9px 10px 12px; border-right: 2px solid #e4e4e4; margin-bottom: 9px; }
.g-display { padding: 0 7px 10px 14px; }
.g-props { padding: 0 1px; }
.tools { display: flex; flex: 1; }
.caption { text-align: center; color: #888; height: 24px; margin-bottom: -7px; }
.big { display: flex; flex-direction: column; align-items: center; width: 76px; height: 121px; padding-top: 4px; }
.big .caret { margin-top: 17px; }
.w90 { width: 90px; }
.w96 { width: 96px; }
.w104 { width: 106px; }
.w112 { width: 112px; }
.list { display: flex; flex-direction: column; align-items: flex-start; }
.row { display: flex; align-items: center; gap: 3px; height: 39px; padding: 0 5px; }
.on { background: #c2d5f2; }
.cluster { display: flex; padding-left: 11px; }
.ruled { border-left: 2px solid #e4e4e4; margin-left: 2px; padding-left: 3px; height: 124px; }
.cubes { display: grid; grid-template-columns: 40px 40px auto; grid-auto-rows: 41px; align-items: center; justify-items: center; }
.caret { width: 0; height: 0; border: 6px solid transparent; border-top-color: #777; border-bottom: 0; }

.toolbar { display: flex; height: 50px; border-bottom: 1px solid #ddd; margin-left: 1px; border-left: 1px solid #ddd; }
.band { display: flex; flex: none; align-items: center; padding: 0 5px 0 3px; border-right: 2px solid #e0e0e0; }
.last { border: 0; padding-right: 0; }
.grip {
  width: 12px;
  height: 37px;
  margin-right: 2px;
  background:
    radial-gradient(circle at 2px 2px, #b4b4c0 1px, transparent 2px) 0 0 / 8px 8px,
    radial-gradient(circle at 6px 6px, #b4b4c0 1px, transparent 2px) 0 0 / 8px 8px;
}
.tb { display: flex; align-items: center; justify-content: center; width: 43px; height: 43px; }
.txt { padding: 0 7px; }
.sep { width: 1px; height: 39px; margin: 0 6px 0 4px; background: #ddd; }
.drop { width: 17px; padding: 20px 0 0 3px; }
.drop .caret, .over .caret { display: block; border-top-color: #333; }
.over { display: flex; flex-direction: column; gap: 17px; width: 21px; padding: 0 0 0 4px; }
.wide { width: 34px; padding-left: 16px; }

.docs { display: flex; align-items: flex-end; height: 42px; padding-left: 4px; border-bottom: 1px solid #2a579a; }
.doctab { display: flex; align-items: center; gap: 25px; height: 39px; padding: 0 6px 0 22px; background: #2a579a; color: #fff; }
.canvas { flex: 1; margin-left: 2px; background: #000; border: 2px solid #666; border-width: 2px 3px 0 2px; border-right-color: #eee; }

.notes { position: absolute; inset: 0; pointer-events: none; color: #f81cf8; }
.marks { width: 100%; height: 100%; }
.note { position: absolute; margin: 0; font-size: 28px; line-height: 38px; white-space: nowrap; }
.large { font-size: 33px; line-height: 48px; }
.n-section { left: 918px; top: 216px; }
.n-view { left: 1192px; top: 218px; }
.n-joint { left: 1500px; top: 219px; }
.n-member { left: 1787px; top: 219px; }
.n-plate { left: 2154px; top: 219px; }
.n-material { left: 2483px; top: 106px; }
.n-render { left: 812px; top: 475px; }
.n-drag { left: 1164px; top: 424px; }
.n-parts { left: 1902px; top: 373px; }
.n-names { left: 2081px; top: 482px; }
.n-reset { left: 1783px; top: 569px; }
.tips {
  position: absolute;
  left: 767px;
  top: 583px;
  width: 538px;
  padding: 22px 38px;
  border: 3px solid #ff3737;
  font-size: 33px;
  line-height: 48px;
}
.tips p { margin: 0 0 29px; }
.tips p:last-child { margin-bottom: 6px; }
```
